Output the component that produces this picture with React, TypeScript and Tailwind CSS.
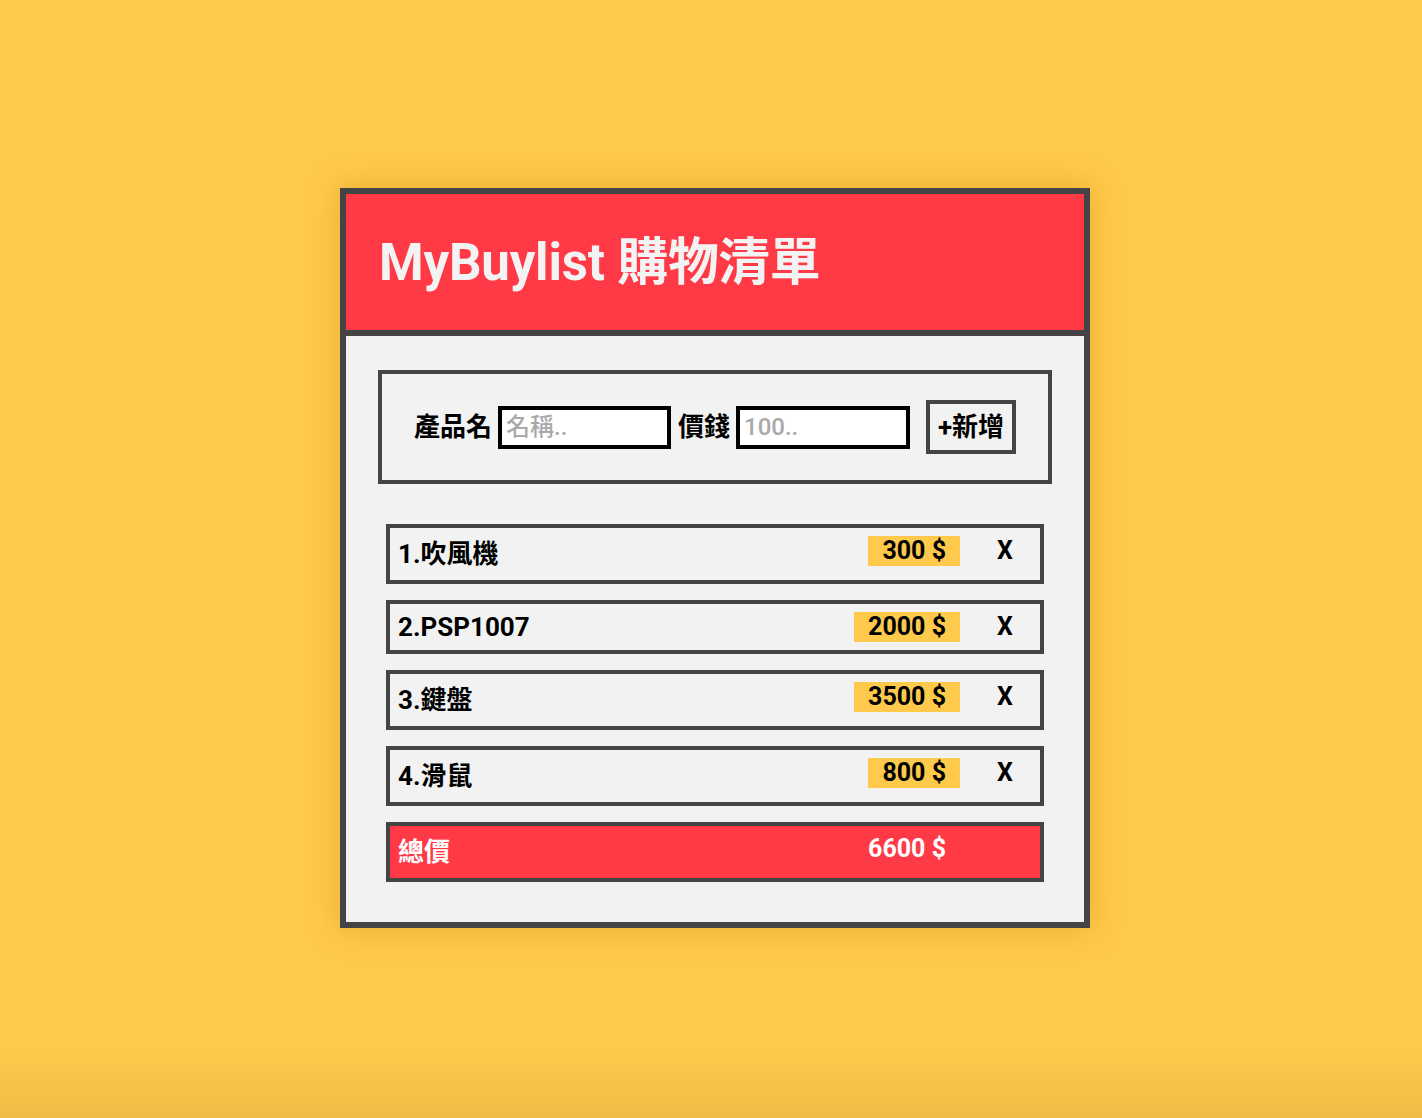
import React from "react";

type Item = { name: string; price: number; cjk: boolean };

const items: Item[] = [
  { name: "1.吹風機", price: 300, cjk: true },
  { name: "2.PSP1007", price: 2000, cjk: false },
  { name: "3.鍵盤", price: 3500, cjk: true },
  { name: "4.滑鼠", price: 800, cjk: true },
];

export default function App() {
  const total = items.reduce((s, i) => s + i.price, 0);
  return (
    <div className="min-h-screen h-[1118px] w-full flex justify-center pl-[8px] pt-[188px] bg-[linear-gradient(to_bottom,#ffc94b_0%,#ffc94b_94%,#f1bc45_100%)] font-['Roboto','Noto_Sans_CJK_TC',sans-serif]">
      <div className="w-[750px] h-[740px] border-[6px] border-[#444] bg-[#f2f2f2] shadow-[0_0_28px_rgba(190,120,0,0.35)] flex flex-col">
        <div className="h-[142px] shrink-0 bg-[#ff3a46] border-b-[6px] border-[#444] flex items-center pl-[33px]">
          <h1 className="text-[51px] font-bold text-[#f3f3f3] leading-none tracking-[-0.2px]">MyBuylist 購物清單</h1>
        </div>
        <div className="pt-[34px] flex flex-col">
          <div className="mx-[32px] h-[114px] border-4 border-[#444] flex items-center justify-center">
            <span className="text-[26px] font-bold text-black mr-[6px]">產品名</span>
            <input
              className="w-[173px] h-[43px] border-4 border-black bg-white px-[4px] text-[24px] font-medium outline-none placeholder:text-[#a9a9a9] font-['Roboto','Noto_Sans_CJK_TC',sans-serif]"
              placeholder="名稱.."
            />
            <span className="text-[26px] font-bold text-black ml-[7px] mr-[6px]">價錢</span>
            <input
              className="w-[174px] h-[43px] border-4 border-black bg-white px-[4px] text-[24px] font-medium outline-none placeholder:text-[#a9a9a9] font-['Roboto','Noto_Sans_CJK_TC',sans-serif]"
              placeholder="100.."
            />
            <button className="ml-[16px] w-[90px] h-[54px] border-4 border-[#444] bg-[#f2f2f2] text-[26px] font-bold text-black leading-none flex items-center justify-center">
              +新增
            </button>
          </div>
          <div className="mt-[40px] mx-[40px] flex flex-col gap-[16px]">
            {items.map((it) => (
              <div
                key={it.name}
                className={
                  (it.cjk ? "h-[60px] " : "h-[54px] ") +
                  "border-4 border-[#444] flex items-center py-[8px] pl-[8px]"
                }
              >
                <span className="text-[26px] font-bold text-black leading-[30px]">{it.name}</span>
                <span className="ml-auto self-start h-[30px] px-[14px] bg-[#ffc94b] text-[25px] font-bold text-black leading-[30px]">
                  {it.price} $
                </span>
                <span className="self-start w-[80px] pl-[37px] text-[25px] font-bold text-black leading-[30px]">X</span>
              </div>
            ))}
            <div className="h-[60px] border-4 border-[#444] bg-[#ff3a46] flex items-center py-[8px] pl-[8px]">
              <span className="text-[26px] font-bold text-white leading-[30px]">總價</span>
              <span className="ml-auto self-start h-[30px] px-[14px] text-[25px] font-bold text-white leading-[30px]">
                {total} $
              </span>
              <span className="self-start w-[80px]"></span>
            </div>
          </div>
        </div>
      </div>
    </div>
  );
}
